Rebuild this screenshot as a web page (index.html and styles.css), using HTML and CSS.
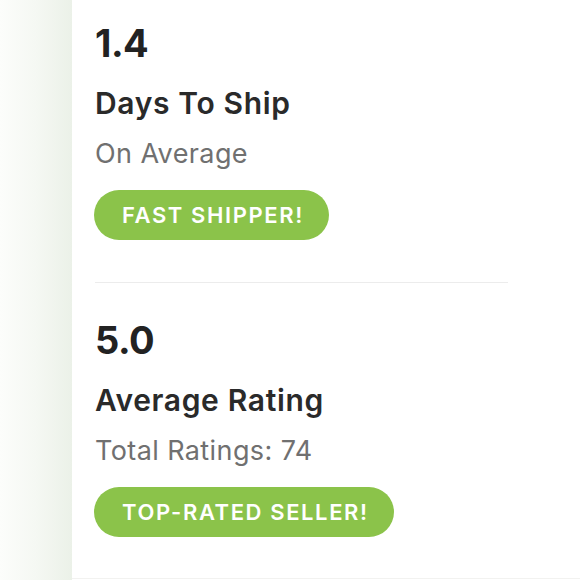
FILE: index.html
```html
<!DOCTYPE html>
<html lang="en">
<head>
<meta charset="utf-8">
<title>Seller stats</title>
<link rel="stylesheet" href="styles.css">
</head>
<body>
<div class="page">
  <div class="backdrop"></div>
  <main class="card">
    <section class="stat">
      <div class="stat-value">1.4</div>
      <div class="stat-title">Days To Ship</div>
      <div class="stat-sub">On Average</div>
      <span class="badge badge-ship">FAST SHIPPER!</span>
    </section>
    <hr class="divider">
    <section class="stat stat-second">
      <div class="stat-value">5.0</div>
      <div class="stat-title">Average Rating</div>
      <div class="stat-sub">Total Ratings: 74</div>
      <span class="badge badge-rated">TOP-RATED SELLER!</span>
    </section>
  </main>
</div>
</body>
</html>
```

FILE: styles.css
```css
* { box-sizing: border-box; }
html, body { margin: 0; padding: 0; }
body {
  width: 580px;
  height: 580px;
  overflow: hidden;
  background: #ffffff;
  font-family: "Inter", "Liberation Sans", sans-serif;
}
.page {
  display: flex;
  width: 580px;
  height: 580px;
}
.backdrop {
  width: 72px;
  flex: none;
  background: linear-gradient(to right, #fcfdfb 0%, #f5f8f3 50%, #ebf1e8 100%);
}
.card {
  flex: 1;
  background: #ffffff;
  padding: 23px 72px 0 23px;
  border-bottom: 1px solid #f2f2f0;
  height: 579px;
}
.stat {
  display: flex;
  flex-direction: column;
  align-items: flex-start;
}
.stat-value {
  font-size: 38px;
  line-height: 40px;
  font-weight: 700;
  color: #222222;
  letter-spacing: -0.5px;
}
.stat-title {
  margin-top: 24px;
  font-size: 30px;
  line-height: 32px;
  font-weight: 600;
  color: #2a2a2a;
  letter-spacing: 0.65px;
}
.stat-sub {
  margin-top: 19px;
  font-size: 27px;
  line-height: 32px;
  font-weight: 400;
  color: #707070;
  letter-spacing: 0.4px;
}
.badge {
  margin-top: 20px;
  height: 50px;
  border-radius: 25px;
  background: #8bc34a;
  color: #ffffff;
  font-size: 22px;
  font-weight: 600;
  letter-spacing: 1.6px;
  display: flex;
  align-items: center;
  padding: 0 25px 0 28px;
  margin-left: -1px;
}
.divider {
  margin: 42px 0 0 0;
  border: none;
  height: 1px;
  background: #ececec;
}
.stat-second { margin-top: 37px; }
```
